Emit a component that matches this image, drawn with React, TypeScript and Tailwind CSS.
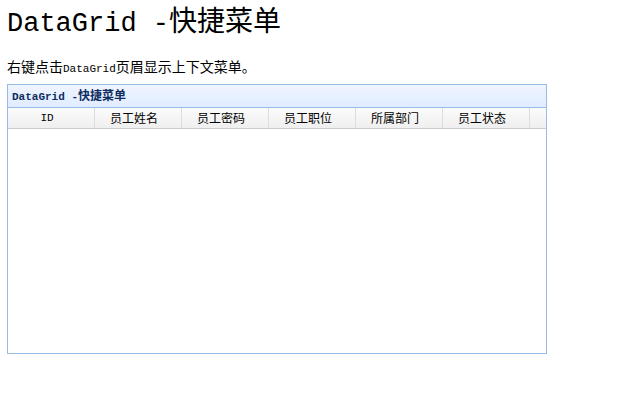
const columns = ["ID", "员工姓名", "员工密码", "员工职位", "所属部门", "员工状态"];

const cjk = '"Noto Sans CJK SC", "Liberation Sans", sans-serif';

export default function App() {
  return (
    <div className="min-h-[396px] w-[620px] bg-white px-[7px] text-black">
      <h1
        className="pt-[2px] text-[28px] leading-[34px] font-normal"
        style={{ fontFamily: cjk }}
      >
        <span className="font-['Liberation_Mono'] text-[27px]">DataGrid -</span>
        快捷菜单
      </h1>
      <p className="mt-[16px] text-[14px] leading-[18px]" style={{ fontFamily: cjk }}>
        右键点击
        <span className="font-['Liberation_Mono'] text-[11px]">DataGrid</span>
        页眉显示上下文菜单。
      </p>

      <div className="mt-[6px] w-[540px] border border-[#99bbe8]">
        <div className="flex h-[23px] items-center border-b border-[#99bbe8] bg-gradient-to-b from-[#eff5ff] to-[#e0ecff] px-[4px]">
          <span
            className="text-[12px] font-bold text-[#0e2d5f]"
            style={{ fontFamily: cjk }}
          >
            <span className="font-['Liberation_Mono'] text-[11px]">DataGrid -</span>
            快捷菜单
          </span>
        </div>
        <div className="flex h-[21px] border-b border-[#cccccc] bg-gradient-to-b from-[#fbfbfb] to-[#efefef]">
          {columns.map((c) => (
            <div
              key={c}
              className="flex w-[87px] items-center justify-center border-r border-[#dddddd] pr-[8px] text-[12px] text-black"
              style={{ fontFamily: cjk }}
            >
              {c === "ID" ? <span className="font-['Liberation_Mono'] text-[11px]">ID</span> : c}
            </div>
          ))}
          <div className="flex-1" />
        </div>
        <div className="h-[224px] bg-white" />
      </div>
    </div>
  );
}
